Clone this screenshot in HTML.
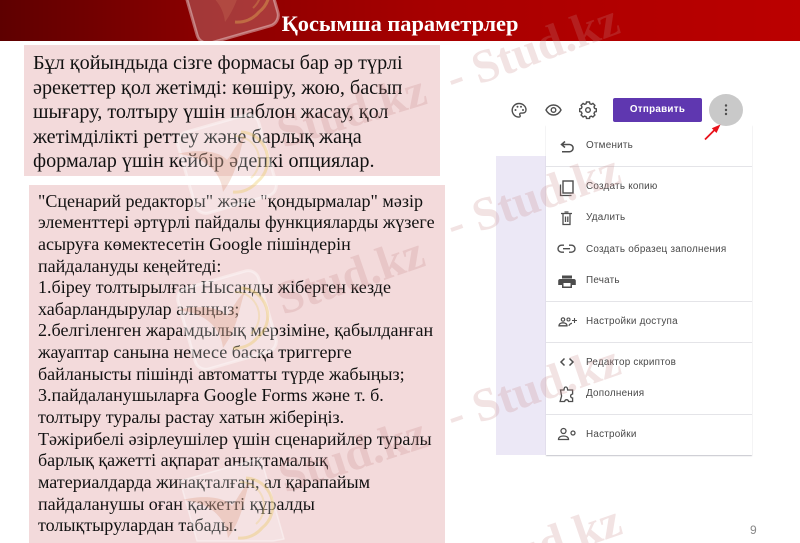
<!DOCTYPE html>
<html><head><meta charset="utf-8">
<style>
html,body{margin:0;padding:0;width:800px;height:543px;overflow:hidden}
body{background:#fff;font-family:"Liberation Serif",serif}
#page{position:relative;width:800px;height:543px;overflow:hidden;contain:paint}
.abs{position:absolute}
#hdr{left:0;top:0;width:800px;height:41px;background:linear-gradient(90deg,#5e0000 0%,#8a0000 25%,#a80000 55%,#bb0000 100%)}
#title{left:0;top:10px;width:800px;text-align:center;color:#fff;font:bold 22.4px/28px "Liberation Serif",serif;white-space:nowrap;filter:blur(.25px)}
.box{background:#f3dadb}
.l1,.l2{position:absolute;white-space:nowrap;color:#111;filter:blur(.3px)}
.l1{left:33px;font-size:20.2px;line-height:24px}
.l2{left:38px;font-size:18.05px;line-height:21px}
.m{position:absolute;left:586px;font:9.9px/12px "Liberation Sans",sans-serif;color:#484848;letter-spacing:.24px;white-space:nowrap;filter:blur(.25px)}
.sep{position:absolute;left:546px;width:206px;height:1px;background:#e4e4e8}
.ic{position:absolute;filter:blur(.3px)}
.ov{position:absolute;left:0;top:0;z-index:5;overflow:hidden}
.ov text{font:bold 47px "Liberation Serif",serif;fill:rgba(200,135,135,.23)}
</style></head>
<body>
<div id="page">
<div class="abs" id="hdr"></div>
<div class="abs box" style="left:24px;top:45px;width:416px;height:131px"></div>
<div class="abs box" style="left:29px;top:185px;width:416px;height:358px"></div>

<div class="l1" style="top:51px">Бұл қойындыда сізге формасы бар әр түрлі</div>
<div class="l1" style="top:76px">әрекеттер қол жетімді: көшіру, жою, басып</div>
<div class="l1" style="top:100px">шығару, толтыру үшін шаблон жасау, қол</div>
<div class="l1" style="top:125px">жетімділікті реттеу және барлық жаңа</div>
<div class="l1" style="top:149px">формалар үшін кейбір әдепкі опциялар.</div>

<div class="l2" style="top:191px">"Сценарий редакторы" және "қондырмалар" мәзір</div>
<div class="l2" style="top:212px">элементтері әртүрлі пайдалы функцияларды жүзеге</div>
<div class="l2" style="top:234px">асыруға көмектесетін Google пішіндерін</div>
<div class="l2" style="top:256px">пайдалануды кеңейтеді:</div>
<div class="l2" style="top:277px">1.біреу толтырылған Нысанды жіберген кезде</div>
<div class="l2" style="top:299px">хабарландырулар алыңыз;</div>
<div class="l2" style="top:320px">2.белгіленген жарамдылық мерзіміне, қабылданған</div>
<div class="l2" style="top:342px">жауаптар санына немесе басқа триггерге</div>
<div class="l2" style="top:364px">байланысты пішінді автоматты түрде жабыңыз;</div>
<div class="l2" style="top:385px">3.пайдаланушыларға Google Forms және т. б.</div>
<div class="l2" style="top:407px">толтыру туралы растау хатын жіберіңіз.</div>
<div class="l2" style="top:429px">Тәжірибелі әзірлеушілер үшін сценарийлер туралы</div>
<div class="l2" style="top:450px">барлық қажетті ақпарат анықтамалық</div>
<div class="l2" style="top:472px">материалдарда жинақталған, ал қарапайым</div>
<div class="l2" style="top:494px">пайдаланушы оған қажетті құралды</div>
<div class="l2" style="top:515px">толықтырулардан табады.</div>

<!-- form UI -->
<div class="abs" style="left:496px;top:156px;width:50px;height:299px;background:#ece8f6"></div>
<div class="abs" style="left:546px;top:125px;width:206px;height:330px;background:#fff;box-shadow:0 1px 1px rgba(90,90,110,.35)"></div>
<div class="sep" style="top:166px"></div>
<div class="sep" style="top:301px"></div>
<div class="sep" style="top:342px"></div>
<div class="sep" style="top:414px"></div>

<div class="abs" style="left:613px;top:98px;width:89px;height:24px;background:#5f37b0;border-radius:2px;color:#fff;font:bold 9.8px/23px 'Liberation Sans',sans-serif;letter-spacing:.3px;text-align:center;filter:blur(.25px)">Отправить</div>
<div class="abs" style="left:709px;top:94px;width:34px;height:32px;background:#c9c9c9;border-radius:50%"></div>
<svg class="ic" style="left:500px;top:95px" width="250" height="50" viewBox="500 95 250 50">
 <g fill="none" stroke="#4e4e4e" stroke-width="1.4">
  <path d="M519 103.5a6.8 6.8 0 1 0 0 13.6c1.2 0 1.5-1 1-1.8-.7-1-.2-2.2 1-2.2h1.7c2 0 3.3-1.4 3.3-3.3 0-3.500-3.200-6.300-7-6.300z"/>
  <path d="M546 110c1.700-3.300 4.300-5 7.500-5s5.800 1.700 7.500 5c-1.700 3.300-4.300 5-7.500 5s-5.800-1.700-7.500-5z"/>
  <circle cx="553.500" cy="110" r="2.300"/>
  <path d="M586.500 103.500h3l.4 1.700 1.500.6 1.500-.9 2 2-.9 1.500.6 1.500 1.700.4v2.800l-1.700.4-.6 1.500.9 1.500-2 2-1.500-.9-1.500.6-.4 1.700h-3l-.4-1.700-1.500-.6-1.500.9-2-2 .9-1.500-.6-1.500-1.700-.4v-2.800l1.700-.4.6-1.500-.9-1.500 2-2 1.500.9 1.500-.6z" transform="translate(0 -1.500)"/>
  <circle cx="588" cy="110" r="2.300"/>
 </g>
 <g fill="#4e4e4e"><circle cx="515.500" cy="110" r="1"/><circle cx="517.500" cy="106.800" r="1"/><circle cx="521" cy="106.800" r="1"/><circle cx="523" cy="110" r="1"/>
 <circle cx="726" cy="105.500" r="1.200"/><circle cx="726" cy="110" r="1.200"/><circle cx="726" cy="114" r="1.200"/></g>
 <path d="M705 139.500L716 128.500" stroke="#e8111a" stroke-width="1.800" fill="none"/>
 <path d="M720.500 124.500L711.800 128.300L716.500 133z" fill="#e8111a"/>
</svg>

<svg class="ic" style="left:552px;top:130px" width="34" height="320" viewBox="552 130 34 320">
 <g fill="none" stroke="#4e4e4e" stroke-width="1.500">
  <path d="M566 142.500l-3.500 3 3.500 3M563 145.500h7.500a3.600 3.600 0 0 1 0 7.200H563" transform="translate(-1 -1)"/>
  <path d="M560.500 184.500v11h11" stroke-width="1.300"/>
  <rect x="563" y="181" width="10" height="12" stroke-width="1.400"/>
  <path d="M561 213.500h11M563 213.500v11h7v-11M564.500 212h4M565.500 216.500v5.500M567.800 216.500v5.500" stroke-width="1.300"/>
  <path d="M564 245.200h-2.500a3.500 3.500 0 0 0 0 7H564M569 245.200h2.500a3.500 3.500 0 0 1 0 7H569M563 248.700h7" stroke-width="1.400"/>
  <path d="M564.500 358.500l-3.500 3.500 3.500 3.500M569.500 358.500l3.500 3.500-3.500 3.500" stroke-width="1.500"/>
  <path d="M560.500 390h3.500c.2-2.500.6-3 1.800-3s1.700.6 1.800 3h5v4c-1.500.3-2 1-2 2s.5 1.800 2 2v3.500h-4c-.3-1.300-1-1.800-2-1.800s-1.700.5-2 1.800h-4.500l1.500-5.500z" stroke-width="1.300"/>
  <path d="M559 325.800c0-2 2-3 4-3s4 1 4 3zM569 325.800c.2-1.500 2-2.500 3-2.500" stroke-width="1.300"/>
  <circle cx="563" cy="319.500" r="1.700" stroke-width="1.200"/>
  <circle cx="568.500" cy="319.500" r="1.500" stroke-width="1.100"/>
  <path d="M572 320.500h5M574.500 318v5" stroke-width="1.100"/>
  <circle cx="563.500" cy="431" r="2.500" stroke-width="1.300"/>
  <circle cx="573" cy="433" r="2" stroke-width="1.300"/>
  <path d="M558.500 439.500c0-2.500 2.500-3.500 5-3.500s5 1 5 3.500z" stroke-width="1.300"/>
 </g>
 <path fill="#4c4c4c" d="M562 275.500h10v3h-10zM560 279h14c1 0 1.800.8 1.800 1.800v4.200H572v3h-10v-3h-3.800v-4.200c0-1 .8-1.800 1.800-1.800z"/>
 <rect x="563.500" y="283" width="7" height="3.500" fill="#fff"/>
</svg>

<div class="m" style="top:140px">Отменить</div>
<div class="m" style="top:181px">Создать копию</div>
<div class="m" style="top:212px">Удалить</div>
<div class="m" style="top:244px">Создать образец заполнения</div>
<div class="m" style="top:275px">Печать</div>
<div class="m" style="top:316px">Настройки доступа</div>
<div class="m" style="top:357px">Редактор скриптов</div>
<div class="m" style="top:388px">Дополнения</div>
<div class="m" style="top:429px">Настройки</div>

<div class="abs" style="left:750px;top:523px;font:12px/14px 'Liberation Sans',sans-serif;color:#888">9</div>

<!-- logo + text watermarks -->
<svg class="ov" width="800" height="543" viewBox="0 0 800 543">
 <defs>
  <g id="lg">
   <rect x="-42" y="-42" width="84" height="84" rx="11" transform="rotate(-16)" fill="rgba(255,255,255,.22)" stroke="rgba(255,255,255,.4)" stroke-width="3"/>
   <path d="M14 -32A28 28 0 0 1 30 18A28 28 0 0 1 6 28" fill="none" stroke="rgba(235,200,90,.36)" stroke-width="3"/>
   <path d="M8 -28A24 24 0 0 1 24 14" fill="none" stroke="rgba(235,200,90,.26)" stroke-width="2"/>
   <path d="M-50 -10C-26 -16 -6 -12 0 -4C5 -10 10 -22 18 -28C12 -14 12 6 -4 28C-6 8 -22 -8 -50 -10z" fill="rgba(215,130,95,.24)"/>
  </g>
 </defs>
 <use href="#lg" x="229" y="-6"/>
 <use href="#lg" x="227" y="164"/>
 <use href="#lg" x="227" y="320"/>
 <!-- fourth logo trimmed at the frame's bottom edge -->
 <path d="M180 481L261 458L284 539L273 541H197z" fill="rgba(255,255,255,.22)" stroke="rgba(255,255,255,.4)" stroke-width="1.500" stroke-linejoin="round"/>
 <path d="M246 478A28 28 0 0 1 262 528A28 28 0 0 1 238 538" fill="none" stroke="rgba(235,200,90,.36)" stroke-width="3"/>
 <path d="M240 482A24 24 0 0 1 256 524" fill="none" stroke="rgba(235,200,90,.26)" stroke-width="2"/>
 <path d="M182 500C206 494 226 498 232 506C237 500 242 488 250 482C244 496 244 516 228 538C226 518 210 502 182 500z" fill="rgba(215,130,95,.24)"/>
 <text transform="translate(283 148) rotate(-17)">Stud.kz</text>
 <text transform="translate(453 94) rotate(-20)">- Stud.kz</text>
 <text transform="translate(283 315) rotate(-19)">Stud.kz</text>
 <text transform="translate(453 241) rotate(-19)">- Stud.kz</text>
 <text transform="translate(285 493) rotate(-18)">Stud.kz</text>
 <text transform="translate(453 432) rotate(-19)">- Stud.kz</text>
 <!-- Intentional: the reference crops this watermark at the bottom edge, so its text box extends below y=543 and is clipped. -->
 <text transform="translate(480 583) rotate(-19)">Stud.kz</text>
</svg>

<div class="abs" id="title" style="z-index:6">Қосымша параметрлер</div>
</div>
</body></html>
